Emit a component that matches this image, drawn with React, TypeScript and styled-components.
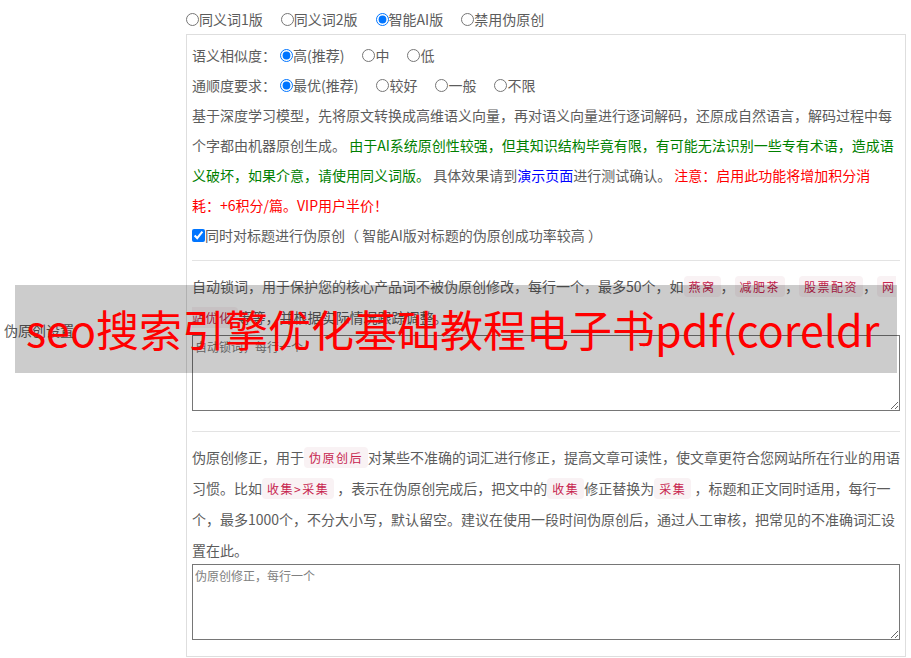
import React from "react";
import styled, { createGlobalStyle } from "styled-components";

const GlobalStyle = createGlobalStyle`
  html, body {
    margin: 0;
    padding: 0;
    background: #fff;
  }
  body {
    font-family: "Noto Sans CJK SC", "Noto Sans", sans-serif;
    font-size: 14px;
    color: #5c5c5c;
  }
  * { box-sizing: border-box; }
`;

const Page = styled.div`
  position: relative;
  display: grid;
  grid-template-columns: 186px 720px;
  padding-top: 4px;
  width: 911px;
  height: 658px;
  overflow: hidden;
`;

const SideLabel = styled.div`
  align-self: center;
  padding-left: 4px;
  margin-top: -2px;
  line-height: 20px;
`;

const MainCell = styled.div`
  display: flex;
  flex-direction: column;
  align-self: start;
`;

const OptionRow = styled.div`
  display: flex;
  align-items: center;
  height: 30px;
  gap: 18px;
`;

const FieldRow = styled.div`
  display: flex;
  align-items: center;
  height: 30px;
`;

const FieldLabel = styled.span`
  margin-right: 4px;
`;

const Options = styled.div`
  display: flex;
  align-items: center;
  gap: 18px;
`;

const Option = styled.label`
  display: inline-flex;
  align-items: center;
  white-space: nowrap;
  line-height: 20px;
`;

const Radio = styled.input`
  margin: 0;
  width: 13px;
  height: 13px;
  flex: none;
`;

const Panel = styled.div`
  border: 1px solid #dedede;
  padding: 5px 5px 16px;
`;

const Para = styled.p<{ $lh: number }>`
  margin: 0;
  line-height: ${(p) => p.$lh}px;
  white-space: nowrap;
`;

const Green = styled.span`
  color: #008000;
`;

const Blue = styled.span`
  color: #0000ff;
`;

const Red = styled.span`
  color: #ff0000;
`;

const Code = styled.code`
  font-family: "Noto Sans CJK SC", sans-serif;
  font-size: 12px;
  letter-spacing: 1.5px;
  padding: 2px 5px;
  color: #c7254e;
  background: #f9f2f4;
  border-radius: 4px;
`;

const Divider = styled.hr<{ $top: number; $bottom: number }>`
  border: 0;
  border-top: 1px solid #e3e3e3;
  margin: ${(p) => p.$top}px 0 ${(p) => p.$bottom}px;
  height: 0;
`;

const TextArea = styled.textarea<{ $mt: number }>`
  display: block;
  width: 100%;
  height: 76px;
  margin: ${(p) => p.$mt}px 0 0;
  padding: 2px;
  border: 1px solid #767676;
  border-radius: 0;
  font-family: "Noto Sans CJK SC", sans-serif;
  font-size: 12px;
  line-height: 18px;
  color: #333;
  &::placeholder {
    color: #808080;
  }
`;

const Overlay = styled.div`
  position: absolute;
  top: 285px;
  left: 15px;
  width: 882px;
  height: 88px;
  background: rgba(0, 0, 0, 0.2);
  overflow: hidden;
  white-space: nowrap;
  color: #ff0000;
  font-size: 43px;
  line-height: 86px;
  padding-left: 11px;
  pointer-events: none;
`;

export default function App() {
  return (
    <>
      <GlobalStyle />
      <Page>
        <SideLabel>伪原创设置</SideLabel>
        <MainCell>
          <OptionRow>
            <Option>
              <Radio type="radio" name="mode" />
              同义词1版
            </Option>
            <Option>
              <Radio type="radio" name="mode" />
              同义词2版
            </Option>
            <Option>
              <Radio type="radio" name="mode" defaultChecked />
              智能AI版
            </Option>
            <Option>
              <Radio type="radio" name="mode" />
              禁用伪原创
            </Option>
          </OptionRow>
          <Panel>
            <FieldRow>
              <FieldLabel>语义相似度：</FieldLabel>
              <Options>
                <Option>
                  <Radio type="radio" name="sim" defaultChecked />
                  高(推荐)
                </Option>
                <Option>
                  <Radio type="radio" name="sim" />
                  中
                </Option>
                <Option>
                  <Radio type="radio" name="sim" />
                  低
                </Option>
              </Options>
            </FieldRow>
            <FieldRow>
              <FieldLabel>通顺度要求：</FieldLabel>
              <Options>
                <Option>
                  <Radio type="radio" name="flu" defaultChecked />
                  最优(推荐)
                </Option>
                <Option>
                  <Radio type="radio" name="flu" />
                  较好
                </Option>
                <Option>
                  <Radio type="radio" name="flu" />
                  一般
                </Option>
                <Option>
                  <Radio type="radio" name="flu" />
                  不限
                </Option>
              </Options>
            </FieldRow>
            <Para $lh={30}>
              基于深度学习模型，先将原文转换成高维语义向量，再对语义向量进行逐词解码，还原成自然语言，解码过程中每
              <br />
              个字都由机器原创生成。{" "}
              <Green>
                由于AI系统原创性较强，但其知识结构毕竟有限，有可能无法识别一些专有术语，造成语
                <br />
                义破坏，如果介意，请使用同义词版。
              </Green>{" "}
              具体效果请到<Blue>演示页面</Blue>进行测试确认。{" "}
              <Red>
                注意：启用此功能将增加积分消
                <br />
                耗：+6积分/篇。VIP用户半价！
              </Red>
            </Para>
            <FieldRow>
              <Option>
                <Radio type="checkbox" defaultChecked />
                同时对标题进行伪原创（ 智能AI版对标题的伪原创成功率较高 ）
              </Option>
            </FieldRow>
            <Divider $top={10} $bottom={10} />
            <Para $lh={30}>
              自动锁词，用于保护您的核心产品词不被伪原创修改，每行一个，最多50个，如<Code>燕窝</Code>，<Code>减肥茶</Code>，<Code>股票配资</Code>，<Code>网<br />站优化</Code>等等，并根据实际情况跟踪调整。
            </Para>
            <TextArea $mt={2} placeholder="自动锁词，每行一个" />
            <Divider $top={20} $bottom={10} />
            <Para $lh={31}>
              伪原创修正，用于<Code>伪原创后</Code>对某些不准确的词汇进行修正，提高文章可读性，使文章更符合您网站所在行业的用语
              <br />
              习惯。比如<Code>收集&gt;采集</Code> ，表示在伪原创完成后，把文中的<Code>收集</Code>修正替换为<Code>采集</Code> ，标题和正文同时适用，每行一
              <br />
              个，最多1000个，不分大小写，默认留空。建议在使用一段时间伪原创后，通过人工审核，把常见的不准确词汇设
              <br />
              置在此。
            </Para>
            <TextArea $mt={-2} placeholder="伪原创修正，每行一个" />
          </Panel>
        </MainCell>
        <Overlay>seo搜索引擎优化基础教程电子书pdf(coreldr</Overlay>
      </Page>
    </>
  );
}
